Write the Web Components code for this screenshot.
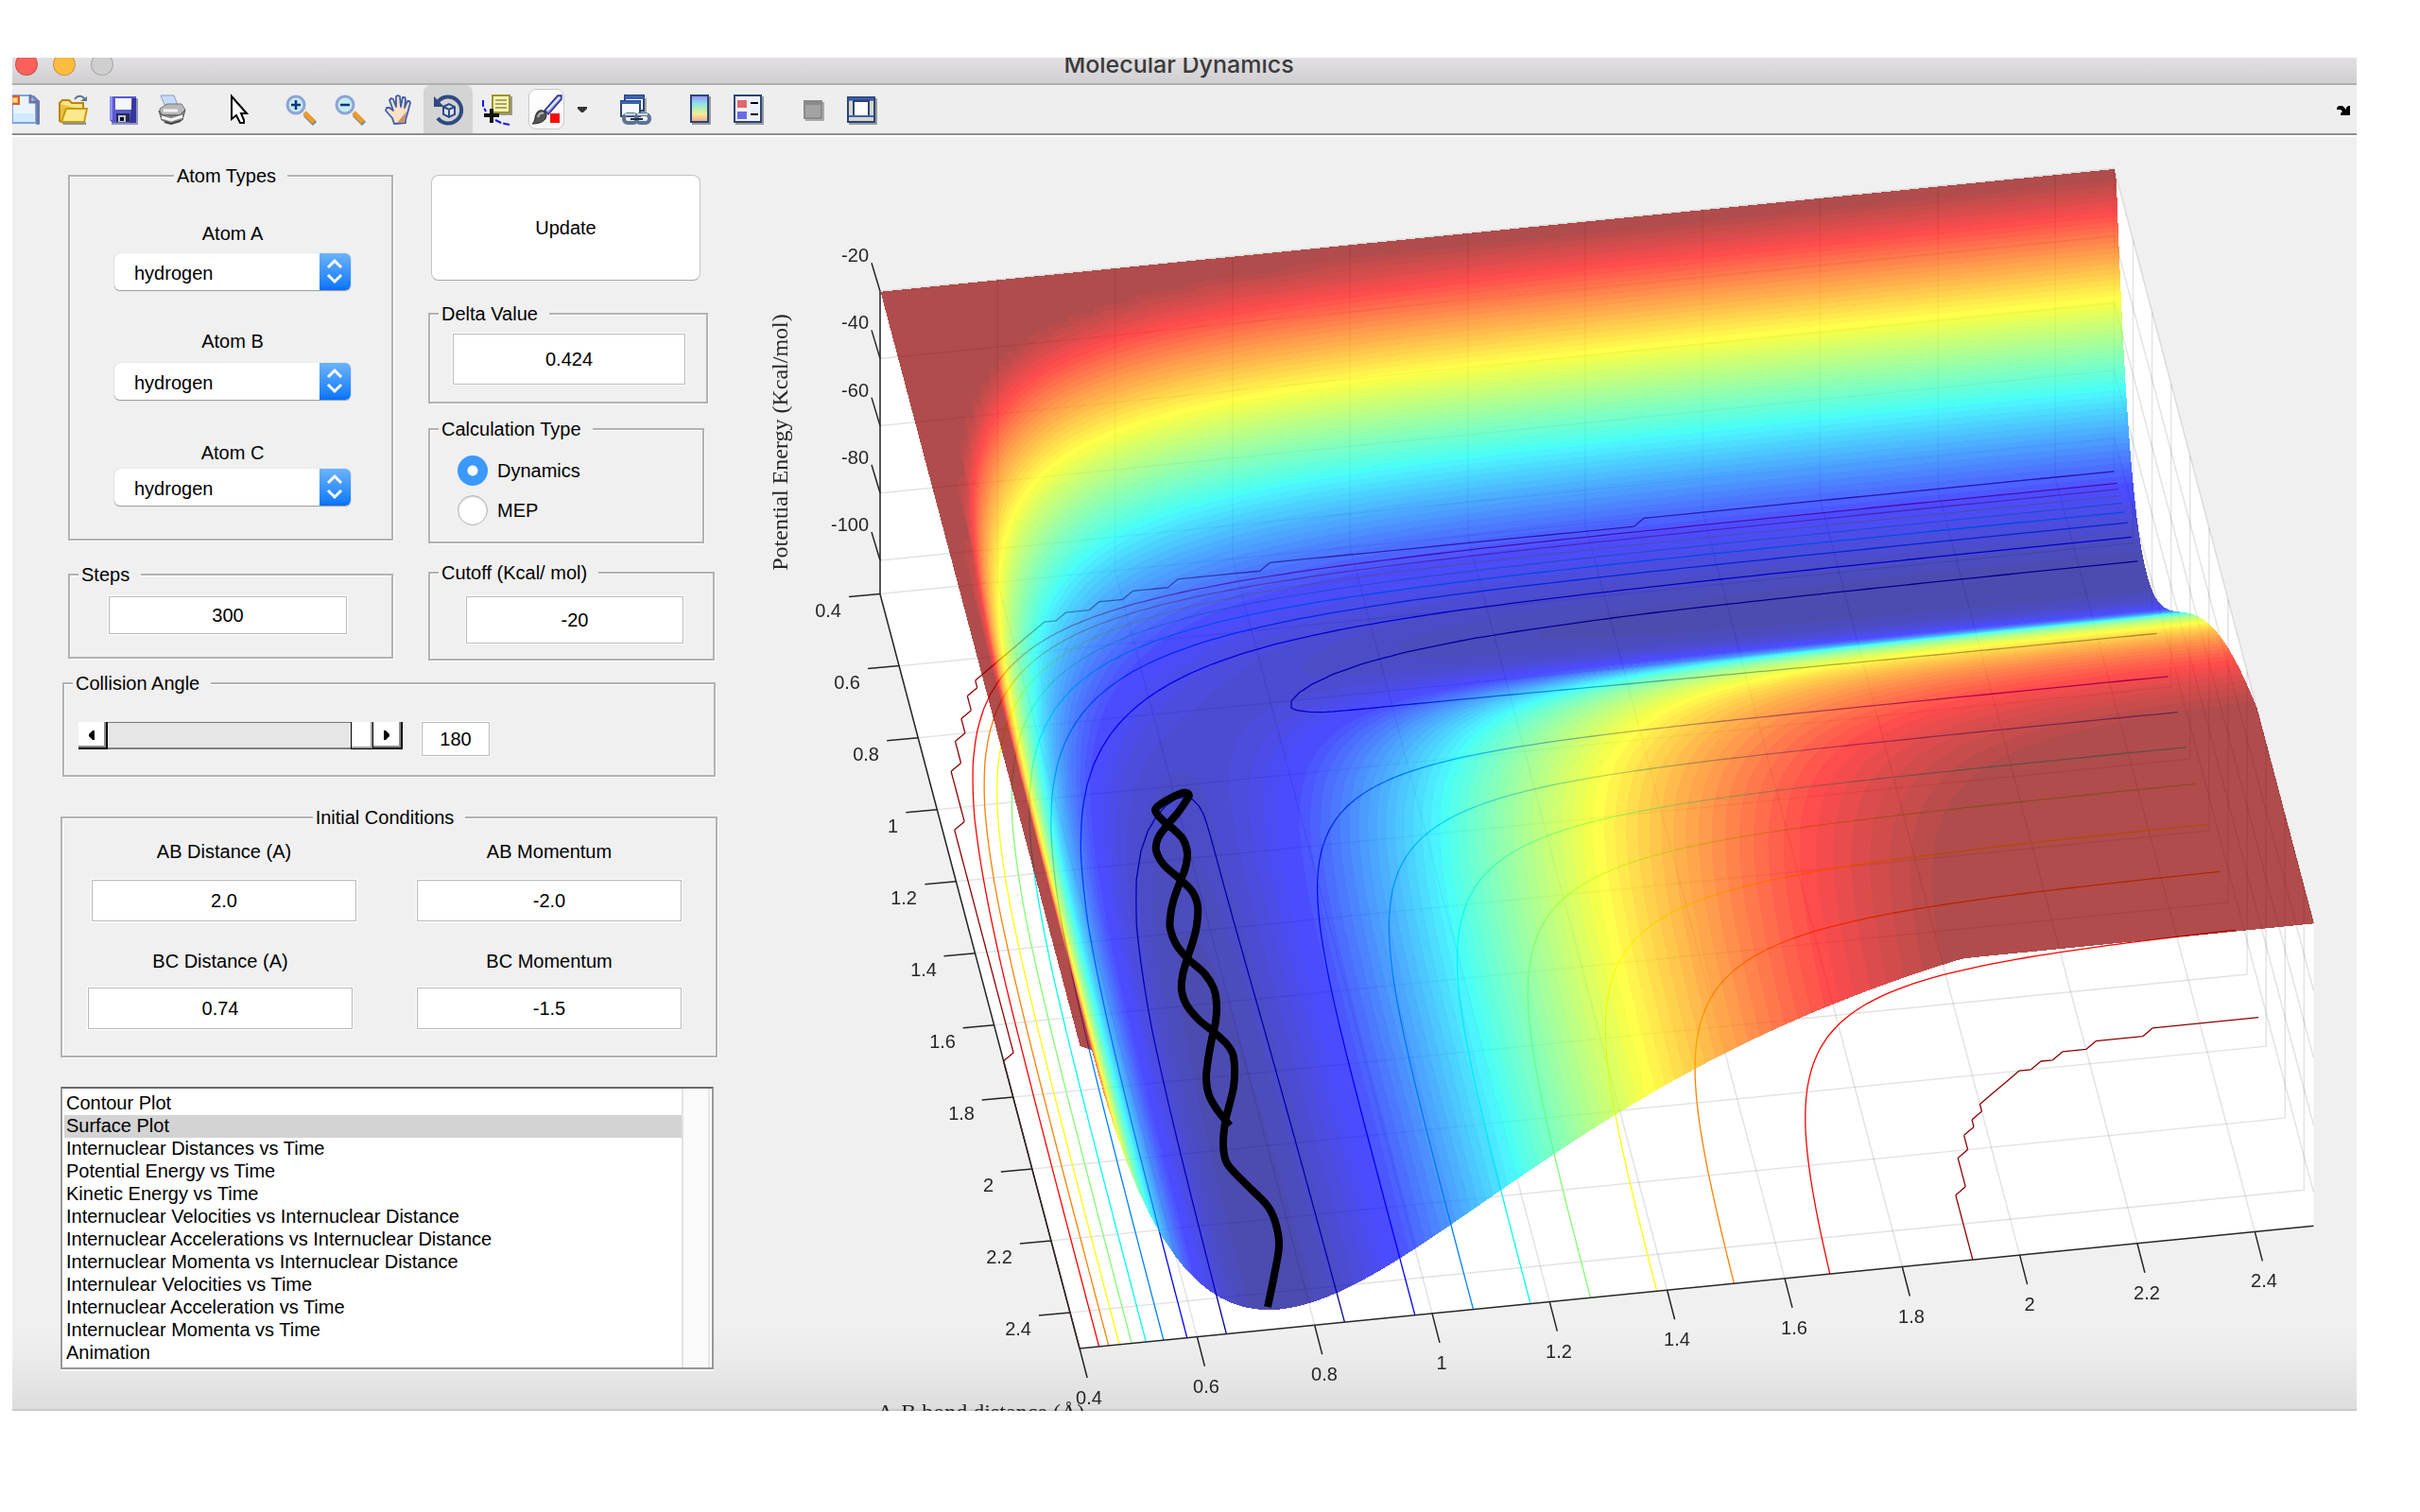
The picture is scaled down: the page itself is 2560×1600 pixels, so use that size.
<!DOCTYPE html>
<html lang="en">
<head>
<meta charset="utf-8">
<title>Molecular Dynamics</title>
<style>
  body { margin: 0; background: #fff; font: 20px/24px "Liberation Sans", Arial, sans-serif; color: #000; }
</style>
</head>
<body>
<md-window caption="Molecular Dynamics">
  <md-toolbar slot="toolbar"></md-toolbar>
  <md-panel slot="panel"></md-panel>
  <md-surface-plot slot="plot"></md-surface-plot>
</md-window>

<script>
const make = (host, html) => {
  const root = host.attachShadow({ mode: 'open' });
  const t = document.createElement('template');
  t.innerHTML = html;
  root.append(t.content.cloneNode(true));
  return root;
};

/* ---------- window frame ---------- */
customElements.define('md-window', class extends HTMLElement {
  constructor() {
    super();
    make(this, `<style>
      :host { display: block; margin: 61px 67px 0 13px; overflow: hidden; background: #f0f0f0; }
      header { display: grid; grid-template-columns: 1fr auto 1fr; align-items: center; align-content: center; height: 14px;
        padding: 0 12px 13px 0; border-bottom: 2px solid #b1b0b1; background: linear-gradient(#e2e0e3, #d0ced1); background-clip: padding-box; }
      .lights { display: flex; gap: 16px; padding-left: 3px; }
      .lights i { box-sizing: border-box; width: 24px; height: 24px; border-radius: 50%; border: 1px solid #0003; }
      h1 { margin: 0; font: 500 25px/32px Inter, sans-serif; color: #3a3a3a; }
      .work { display: grid; grid-template-columns: 757px 1fr;
        background: linear-gradient(#0000, #00000006 40%, #00000014 97%, #0003) bottom / 100% 90px no-repeat; }
    </style>
    <header><div class="lights"><i style="background:#fc605b"></i><i style="background:#fdbc40"></i><i style="background:#cfcfcf"></i></div><h1></h1></header>
    <slot name="toolbar"></slot>
    <div class="work"><slot name="panel"></slot><slot name="plot"></slot></div>`)
      .querySelector('h1').textContent = this.getAttribute('caption');
  }
});

/* ---------- toolbar ---------- */
const ICONS = {
  'new': `<path d="M6 4h22l6 6v24H8z" fill="#6f7fae" transform="translate(-2 -3)"/><path d="M3 1h19l6 7v22H3z" fill="#e9f4ff" stroke="#7ba3dc" stroke-width="2"/><path d="M22 0v8h8v24" fill="none" stroke="#6a76a8" stroke-width="3"/><path d="M4 20h22v9H4z" fill="#d2e9fd"/><path d="M0 2h10v8H0z" fill="#f6a06a" stroke="#d4622e" stroke-width="2"/><path d="M4 4h4v4H4z" fill="#ffe27a"/>`,
  open: `<path d="M3 29h26v3H5z" fill="#8894a4"/><path d="M1 9l3-3h7l3 3h12v8H1z" fill="#fbe38a" stroke="#b8860b" stroke-width="2"/><path d="M1 10v18l2 1h23V16" fill="#e9c243" stroke="#b8860b" stroke-width="2"/><path d="M8 15h22l-3 14H3z" fill="#fde98c" stroke="#c79a12" stroke-width="2"/><path d="M17 5c3-5 9-4 11 1" fill="none" stroke="#5a7796" stroke-width="2"/><path d="M23 7h7V2z" fill="#5a7796"/>`,
  save: `<path d="M4 4h28v28H4z" fill="#8e98b4"/><path d="M2 2h28v28H5l-3-3z" fill="#5a5ad2"/><path d="M2 2h3v25H2z" fill="#8f8ff0"/><path d="M26 4h4v26h-7z" fill="#3636a0"/><path d="M8 4h17v12H8z" fill="#f1f8ff"/><path d="M9 20h14v9H9z" fill="#2a2a4c"/><path d="M11 22h8v7h-8z" fill="#b7c8d4"/><path d="M13 24h4v4h-4z" fill="#112"/>`,
  print: `<path d="M4 1h14l4 10H8z" fill="#c6dcff" stroke="#8d9bb8"/><path d="M3 15l8-5h15l4 6-5 6H4z" fill="#b9b9b9" stroke="#777"/><path d="M2 17l3 10 10 4 12-4 3-11-6 6H6z" fill="#8a8a8a" stroke="#555"/><path d="M7 17h15M5 24l10 3 12-4" stroke="#f4f4f4" stroke-width="3" fill="none"/><path d="M8 29l7 2 10-3" stroke="#444" stroke-width="2" fill="none"/>`,
  arrow: `<path d="M7 2v24l5-4 4 8h4v-3l-3-7h6z" fill="#fff" stroke="#000" stroke-width="2"/>`,
  zin: `<path d="M20 20l10 10" stroke="#888" stroke-width="6" transform="translate(1 1)"/><path d="M20 19l10 10" stroke="#ee9a2c" stroke-width="5"/><circle cx="11" cy="11" r="9" fill="#c4ecf2" stroke="#8fa3d6" stroke-width="3"/><path d="M6 11h10M11 6v10" stroke="#12357a" stroke-width="2.5"/>`,
  zout: `<path d="M20 20l10 10" stroke="#888" stroke-width="6" transform="translate(1 1)"/><path d="M20 19l10 10" stroke="#ee9a2c" stroke-width="5"/><circle cx="11" cy="11" r="9" fill="#c4ecf2" stroke="#8fa3d6" stroke-width="3"/><path d="M6 11h10" stroke="#12357a" stroke-width="2.5"/>`,
  hand: `<path d="M11 31l-2-6-7-8 1-3 3 0 4 3-4-11 2-2 2 1 3 8 0-11 2-1 2 1 1 11 2-10 2 0 1 2-1 9 3-7 2 0 1 2-3 11-2 7v3z" fill="#fde0c6" stroke="#3c5eb0" stroke-width="1.8" stroke-linejoin="round"/><path d="M14 30l10-12-2 12z" fill="#c8946b"/>`,
  rotate: `<path d="M5 8A14 14 0 1 1 5 25" fill="none" stroke="#2f4a80" stroke-width="4"/><path d="M1 2v11h11z" fill="#2f4a80"/><path d="M11 13l6-3 6 3v8l-6 3-6-3zM11 13l6 3 6-3M17 16v8" fill="#dfe3f2" stroke="#2f4a80" stroke-width="2"/>`,
  cursor: `<path d="M12 2h20v20H12z" fill="#999"/><path d="M11 1h18v18H11z" fill="#f7f3b4" stroke="#9a942c" stroke-width="2"/><path d="M14 6h12M14 10h12M14 14h12" stroke="#aaa667" stroke-width="2"/><path d="M1 6v6l3 6M14 27l6 3 9 2" fill="none" stroke="#1414ff" stroke-width="2" stroke-dasharray="7 2"/><path d="M10 15v15M2 22h16" stroke="#111" stroke-width="4"/>`,
  brush: `<path d="M14 17L28 1l4 0 0 4L18 21z" fill="#8c92dc" stroke="#2b2f90" stroke-width="1.5"/><path d="M17 17L30 3" stroke="#e6e9ff" stroke-width="2"/><path d="M1 31c4-3 2-9 6-13 4-3 9 0 9 4 0 6-7 9-15 9z" fill="#555" stroke="#222"/><path d="M7 24c1-4 4-5 6-4" stroke="#bbb" stroke-width="2" fill="none"/><path d="M20 20h10v10H20z" fill="#f80d0d"/>`,
  link: `<path d="M8 4h20v18H8z" fill="#aaa"/><path d="M5 1h20v16H5z" fill="#fff" stroke="#2c4478" stroke-width="2"/><path d="M5 1h20v4H5z" fill="#3b62b4"/><path d="M1 7h20v16H1z" fill="#f4f8ff" stroke="#2c4478" stroke-width="2"/><path d="M1 7h20v3H1z" fill="#3b62b4"/><rect x="4" y="21" width="14" height="9" rx="4" fill="none" stroke="#5f7391" stroke-width="4"/><rect x="17" y="21" width="14" height="9" rx="4" fill="none" stroke="#5f7391" stroke-width="4"/><path d="M5 21h11M18 21h11" stroke="#c9dcf0" stroke-width="2"/><path d="M11 26h13" stroke="#16304f" stroke-width="2"/>`,
  colorbar: `<defs><linearGradient id="g" x2="0" y2="1"><stop stop-color="#9a8df0"/><stop offset=".3" stop-color="#8fe0ee"/><stop offset=".5" stop-color="#b2efb0"/><stop offset=".7" stop-color="#f5eb95"/><stop offset="1" stop-color="#f0a592"/></linearGradient></defs><path d="M8 2h20v30H8z" fill="#999"/><path d="M7 1h18v28H7z" fill="url(#g)" stroke="#2c4478" stroke-width="2"/>`,
  legend: `<path d="M2 2h30v30H2z" fill="#999"/><path d="M1 1h28v28H1z" fill="#eef3fb" stroke="#2c4478" stroke-width="2"/><path d="M4 6h10v8H4z" fill="#e36868"/><path d="M4 18h10v8H4z" fill="#6a6ae6"/><path d="M18 9h8M18 21h8" stroke="#000" stroke-width="2"/>`,
  hide: `<path d="M8 8h20v20H8z" fill="#aaa"/><path d="M7 7h18v18H7z" fill="#a3a3a3" stroke="#8a8a8a" stroke-width="2"/><path d="M7 9h18" stroke="#8a8a8a" stroke-width="4"/>`,
  show: `<path d="M2 4h30v28H2z" fill="#999"/><path d="M1 3h28v26H1z" fill="#d6d6cc" stroke="#2c4478" stroke-width="2"/><path d="M1 3h28v3H1z" fill="#3b62b4" stroke="#2c4478"/><path d="M7 7h16v16H7z" fill="#fff" stroke="#2c4478" stroke-width="2"/><path d="M2 23h26" stroke="#3b62b4" stroke-width="2"/>`
};
customElements.define('md-tool', class extends HTMLElement {
  constructor() {
    super();
    make(this, `<style>
      :host { display: block; }
      button { display: grid; place-items: center; width: 52px; height: 51px; margin: 0; padding: 1px 0 0; border: 0; background: none; border-radius: 8px 8px 0 0; }
      :host([active]) button { background: #d4d4d4; }
      :host([framed]) button { width: 38px; height: 43px; margin: 4px 7px; border-radius: 8px; background: linear-gradient(#fff, #f6f6f6); border: 1px solid #c9c9c9; }
      svg { display: block; overflow: visible; }
    </style><button aria-label="${this.getAttribute('icon')}"><svg width="32" height="32" viewBox="0 0 32 32">${ICONS[this.getAttribute('icon')]}</svg></button>`);
  }
});
customElements.define('md-toolbar', class extends HTMLElement {
  constructor() {
    super();
    const t = (n, a = '') => `<md-tool icon="${n}" ${a}></md-tool>`;
    make(this, `<style>
      :host { display: flex; justify-content: space-between; align-items: center; height: 51px; background: #eee;
        border-bottom: 2px solid #8d8d8d; box-shadow: 0 2px 0 #fff; margin-bottom: 2px; }
      .tools { display: flex; align-items: center; margin-left: -13px; }
      .tools div { display: flex; align-items: center; }
      .a { margin-right: 20px; } .b { margin-right: 12px; } .c { margin-right: 18px; } .d { margin-right: 16px; }
      button { padding: 0; border: 0; background: none; width: 24px; height: 40px; display: grid; place-items: center; }
      .dock { width: 21px; place-items: center start; padding-top: 2px; }
      svg { display: block; }
    </style>
    <div class="tools">
      <div class="a">${t('new')}${t('open')}${t('save')}${t('print')}</div>
      <div class="b">${t('arrow')}</div>
      <div class="c">${t('zin')}${t('zout')}${t('hand')}${t('rotate', 'active')}${t('cursor')}${t('brush', 'framed')}
        <button aria-label="Brush options"><svg width="10" height="6"><path d="M0 0h10v2L6 6H4L0 2z" fill="#333"/></svg></button></div>
      <div class="d">${t('link')}</div>
      <div class="d">${t('colorbar')}${t('legend')}</div>
      <div>${t('hide')}${t('show')}</div>
    </div>
    <button class="dock" aria-label="Dock figure"><svg width="14" height="10"><path d="M0 2l2-2h4l4 4V2l2-2h2v10H4V8l2-2-2-2H0z" fill="#000"/></svg></button>`);
  }
});

/* ---------- form parts ---------- */
customElements.define('md-group', class extends HTMLElement {
  constructor() {
    super();
    make(this, `<style>
      :host { display: block; }
      fieldset { margin: 0; min-width: 0; padding: 0; border: 2px solid #b2b2b2; box-shadow: 2px 2px 0 -1px #fff, inset 2px 2px 0 -1px #fff; }
      legend { margin-left: 9px; padding: 0 12px 0 3px; background: #f0f0f0; line-height: 24px; }
      :host([centered]) legend { margin: 0 auto; }
      div { padding: var(--pad, 0); }
    </style><fieldset><legend>${this.getAttribute('label')}</legend><div><slot></slot></div></fieldset>`);
  }
});
customElements.define('md-text', class extends HTMLElement {
  constructor() {
    super();
    const label = this.getAttribute('label');
    make(this, `<style>
      :host { display: flex; flex-direction: column; width: var(--w); }
      label { text-align: center; margin-bottom: var(--gap, 16px); }
      input { box-sizing: border-box; width: 100%; height: var(--h, 44px); margin: 0; padding: 0; border: 1px solid #b9b9b9; border-radius: 0;
        box-shadow: 0 0 0 1px #fff; background: #fff; font: inherit; color: inherit; text-align: center; outline: 0; }
    </style>${label ? `<label for="i">${label}</label>` : ''}<input id="i" type="text" value="${this.getAttribute('value')}" aria-label="${label || this.getAttribute('name')}">`);
  }
});
customElements.define('md-dropdown', class extends HTMLElement {
  constructor() {
    super();
    make(this, `<style>
      :host { display: flex; flex-direction: column; align-items: center; }
      label { margin-bottom: var(--gap); }
      div { display: grid; width: 250px; height: 39px; border-radius: 6px; overflow: hidden; background: #fff; box-shadow: 0 1px 1px #999, 0 0 1px #aaa; }
      select { grid-area: 1 / 1; appearance: none; width: 100%; border: 0; background: none; padding: 3px 40px 0 21px; font: inherit; color: inherit; }
      svg { grid-area: 1 / 1; justify-self: end; pointer-events: none; background: linear-gradient(#6cb3fa, #1a80fd 85%, #0a6cf5); }
    </style><label for="s">${this.getAttribute('label')}</label>
    <div><select id="s"><option>hydrogen</option></select>
    <svg width="33" height="39"><path d="M9 15l7-7 7 7M9 23l7 7 7-7" fill="none" stroke="#fff" stroke-width="3"/></svg></div>`);
  }
});
customElements.define('md-radios', class extends HTMLElement {
  constructor() {
    super();
    make(this, `<style>
      :host { display: flex; flex-direction: column; gap: 10px; }
      label { display: flex; align-items: center; gap: 10px; }
      input { appearance: none; box-sizing: border-box; width: 32px; height: 32px; margin: 0; border-radius: 50%; background: #fff; border: 1px solid #b5b5b5; box-shadow: inset 0 1px 2px #0003; }
      input:checked { border: 0; box-shadow: none; background: radial-gradient(circle, #fff 5px, #3b99fc 6px); }
    </style><label><input type="radio" name="calc" checked>Dynamics</label><label><input type="radio" name="calc">MEP</label>`);
  }
});
customElements.define('md-slider', class extends HTMLElement {
  constructor() {
    super();
    make(this, `<style>
      :host { display: flex; width: 343px; height: 29px; }
      button { width: 31px; padding: 0 4px 2px 0; border: 0; background: #fff; box-shadow: inset -2px -2px #000, inset -4px -4px #8c8c8c; display: grid; place-items: center; }
      input { appearance: none; flex: 1; min-width: 0; height: 29px; margin: 0; background: #e6e6e6; box-shadow: inset 0 1px #777, inset 0 -2px #808080; }
      input::-webkit-slider-thumb { appearance: none; width: 24px; height: 29px; background: #fff; box-shadow: inset 1px 0 #000, inset -1px -1px #000, inset -3px -3px #999; }
    </style>
    <button aria-label="Decrease angle"><svg width="6" height="10"><path d="M6 0v10H4L0 6V4l4-4z"/></svg></button>
    <input type="range" min="0" max="180" value="180" aria-label="Collision Angle">
    <button aria-label="Increase angle"><svg width="6" height="10"><path d="M0 0v10h2l4-4V4L2 0z"/></svg></button>`);
  }
});
customElements.define('md-listbox', class extends HTMLElement {
  constructor() {
    super();
    const items = ['Contour Plot', 'Surface Plot', 'Internuclear Distances vs Time', 'Potential Energy vs Time', 'Kinetic Energy vs Time',
      'Internuclear Velocities vs Internuclear Distance', 'Internuclear Accelerations vs Internuclear Distance',
      'Internuclear Momenta vs Internuclear Distance', 'Internulear Velocities vs Time', 'Internuclear Acceleration vs Time',
      'Internuclear Momenta vs Time', 'Animation'];
    make(this, `<style>
      :host { display: block; }
      select { display: block; box-sizing: border-box; width: 100%; height: 299px; margin: 0; padding: 4px 32px 0 2px; border: 2px solid #979797; border-top-color: #6b6b6b;
        border-radius: 0; outline: 0; overflow: hidden; font: inherit; color: #000; box-shadow: 0 2px #fafafa;
        background: linear-gradient(90deg, #e2e2e2 2px, #fafafa 2px, #fafafa 28px, #e6e6e6 28px, #e6e6e6 30px, #fff 30px) right / 32px 100% no-repeat #fff; }
      option { height: 24px; min-height: 24px; line-height: 24px; padding: 0 2px; box-sizing: border-box; color: #000; }
      option:checked { background: linear-gradient(#d3d3d3, #d3d3d3); color: #000; }
    </style><select size="12" aria-label="Plot type">${items.map((s, i) => `<option${i === 1 ? ' selected' : ''}>${s}</option>`).join('')}</select>`);
  }
});

/* ---------- control panel ---------- */
customElements.define('md-panel', class extends HTMLElement {
  constructor() {
    super();
    make(this, `<style>
      :host { display: flex; flex-direction: column; padding: 29px 11px 0 51px; }
      .top { display: flex; gap: 37px; padding-left: 8px; }
      .left { width: 344px; display: flex; flex-direction: column; gap: 24px; }
      .right { flex: 1; display: flex; flex-direction: column; padding-top: 11px; }
      .atoms { --pad: 37px 0 35px 4px; }
      .update { width: 285px; height: 112px; margin: 0 0 23px 3px; border: 1px solid #c4c4c4; border-bottom-color: #aaa; border-radius: 8px; background: #fff; font: inherit; padding: 0; }
      .steps { --pad: 11px 47px 24px 41px; }
      .delta { --pad: 9px 22px 18px 24px; width: 296px; margin-bottom: 15px; }
      .calc { --pad: 16px 29px 17px; width: 292px; margin-bottom: 19px; }
      .cut { --pad: 13px 31px 16px 38px; width: 303px; }
      .angle { --pad: 29px 15px 20px; margin: 12px 2px 31px 2px; }
      .line { display: flex; align-items: flex-start; gap: 20px; }
      .init { --pad: 12px 0 28px; margin-bottom: 31px; }
      .row { display: flex; --w: 280px; }
      .one { padding-left: 31px; gap: 64px; margin-bottom: 30px; --gap: 18px; }
      .two { padding-left: 27px; gap: 68px; --gap: 16px; }
      md-listbox { margin-right: 4px; }
    </style>
    <div class="top">
      <div class="left">
        <md-group class="atoms" label="Atom Types" centered>
          <md-dropdown label="Atom A" style="--gap:9px"></md-dropdown>
          <md-dropdown label="Atom B" style="--gap:11px;margin:42px 0 44px"></md-dropdown>
          <md-dropdown label="Atom C" style="--gap:5px"></md-dropdown>
        </md-group>
        <md-group class="steps" label="Steps"><md-text name="Steps" value="300" style="--h:40px"></md-text></md-group>
      </div>
      <div class="right">
        <button class="update">Update</button>
        <md-group class="delta" label="Delta Value"><md-text name="Delta Value" value="0.424" style="--h:54px"></md-text></md-group>
        <md-group class="calc" label="Calculation Type"><md-radios></md-radios></md-group>
        <md-group class="cut" label="Cutoff (Kcal/ mol)"><md-text name="Cutoff" value="-20" style="--h:50px"></md-text></md-group>
      </div>
    </div>
    <md-group class="angle" label="Collision Angle"><div class="line"><md-slider></md-slider><md-text name="Angle" value="180" style="--w:72px;--h:36px"></md-text></div></md-group>
    <md-group class="init" label="Initial Conditions" centered>
      <div class="row one"><md-text label="AB Distance (A)" value="2.0"></md-text><md-text label="AB Momentum" value="-2.0"></md-text></div>
      <div class="row two"><md-text label="BC Distance (A)" value="0.74"></md-text><md-text label="BC Momentum" value="-1.5"></md-text></div>
    </md-group>
    <md-listbox></md-listbox>`);
  }
});

/* ---------- surface plot ---------- */
// LEPS potential for collinear H + H2, energies in kcal/mol, distances in angstrom
const D = 104.2, BETA = 1.99, RE = 0.74, KAPPA = 0.697, CUT = -20;
function pair(r) {
  const e = Math.exp(-BETA * (r - RE)), s = D * (e * e - 2 * e), t = KAPPA * D / 2 * (e * e + 2 * e);
  return [(s + t) / 2, (s - t) / 2];
}
function leps(a, b) {
  const [q1, j1] = pair(a), [q2, j2] = pair(b), [q3, j3] = pair(a + b);
  return Math.min(CUT, q1 + q2 + q3 - Math.sqrt(((j1 - j2) ** 2 + (j2 - j3) ** 2 + (j1 - j3) ** 2) / 2));
}
const OX = 770, OY = 145, W = 1723, H = 1348, ZMIN = -110, N = 105, STEP = 0.02;
const project = (x, y, z) => {
  const u = x - 0.4, v = y - 0.4;
  return [931 - OX + 621.6 * u + 100.5 * v, 628.6 - OY - 61.8 * u + 380.2 * v - 3.56 * (z - ZMIN)];
};
function jet(i) {
  const f = k => Math.max(0, Math.min(1, k));
  const m = i + 1, ramp = c => f(m <= c ? (m - c + 24) / 16 : (c + 24 - m) / 16);
  return [ramp(49), ramp(33), ramp(16)].map(v => Math.round(v * 255));
}
const css = c => `rgb(${c.join()})`;
const TRACK = [[1341,1383],[1348,1349],[1353,1318],[1349,1293],[1340,1275],[1317,1252],[1298,1231],[1294,1211],[1296,1188],[1300,1171],[1305,1150],[1306,1130],[1304,1115],[1297,1104],[1284,1092],[1268,1079],[1255,1063],[1250,1048],[1251,1032],[1256,1014],[1262,996],[1266,979],[1267,959],[1261,943],[1248,930],[1231,915],[1223,900],[1225,887],[1234,874],[1246,860],[1255,847],[1258,842],[1255,839],[1248,840],[1234,847],[1223,855],[1223,860],[1231,869],[1242,878],[1252,889],[1256,903],[1254,918],[1248,934],[1241,954],[1238,970],[1238,983],[1244,999],[1256,1014],[1274,1030],[1284,1046],[1287,1063],[1286,1081],[1282,1099],[1278,1121],[1276,1142],[1279,1159],[1288,1175],[1301,1191]];

customElements.define('md-surface-plot', class extends HTMLElement {
  constructor() {
    super();
    const ticks = [], labels = [];
    const seg = (x1, y1, x2, y2) => ticks.push(`M${x1.toFixed(1)} ${y1.toFixed(1)}L${x2.toFixed(1)} ${y2.toFixed(1)}`);
    const text = (x, y, s, a) => labels.push(`<text x="${Math.round(x)}" y="${Math.round(y)}" text-anchor="${a}">${s}</text>`);
    for (let k = 2; k <= 12; k++) {
      const v = k / 5;
      let [x, y] = project(v, 2.5, ZMIN);
      seg(x, y, x + 8, y + 31); text(x + 10, y + 59, String(v), 'middle');
      [x, y] = project(0.4, v, ZMIN);
      seg(x, y, x - 33, y + 3); text(x - 41, y + 24, String(v), 'end');
    }
    for (let z = -20; z >= -100; z -= 20) {
      const [x, y] = project(0.4, 0.4, z);
      seg(x, y, x - 9, y - 30); text(x - 12, y - 31, String(z), 'end');
    }
    const corner = [[0.4, 0.4, -20], [0.4, 0.4, ZMIN], [0.4, 2.5, ZMIN], [2.5, 2.5, ZMIN]].map(p => project(...p));
    // smooth the trajectory with Catmull-Rom segments
    const T = TRACK.map(([x, y]) => [x - OX, y - OY]);
    let path = `M${T[0]}`;
    for (let i = 0; i < T.length - 1; i++) {
      const a = T[Math.max(0, i - 1)], b = T[i], c = T[i + 1], d = T[Math.min(T.length - 1, i + 2)];
      const q = [b[0] + (c[0] - a[0]) / 6, b[1] + (c[1] - a[1]) / 6, c[0] - (d[0] - b[0]) / 6, c[1] - (d[1] - b[1]) / 6];
      path += `C${q.map(n => n.toFixed(1))},${c}`;
    }
    this.root = make(this, `<style>
      :host { display: grid; }
      canvas, svg { grid-area: 1 / 1; display: block; width: 100%; height: auto; }
      text { font: 20px "Liberation Sans", Arial, sans-serif; fill: #262626; }
      .axis { font: 24px "Liberation Serif", "Times New Roman", serif; }
    </style>
    <canvas width="${W}" height="${H}"></canvas>
    <svg viewBox="0 0 ${W} ${H}">
      <g fill="none" stroke="#262626" stroke-width="1.5"><path d="${ticks.join('')}"/><polyline points="${corner.join(' ')}"/></g>
      <path d="${path}" fill="none" stroke="#000" stroke-width="8" stroke-linejoin="round"/>
      ${labels.join('')}
      <text class="axis" text-anchor="middle" transform="translate(63 323) rotate(-90)">Potential Energy (Kcal/mol)</text>
      <text class="axis" x="158" y="1357">A-B bond distance (Å)</text>
    </svg>`);
  }
  connectedCallback() {
    const ctx = this.root.querySelector('canvas').getContext('2d');
    const line = (...pts) => {
      ctx.beginPath();
      pts.forEach((p, i) => ctx[i ? 'lineTo' : 'moveTo'](...project(...p)));
    };
    // axes box: floor, back wall, right wall
    ctx.fillStyle = '#fff';
    line([0.4, 0.4, -20], [0.4, 0.4, ZMIN], [0.4, 2.5, ZMIN], [2.5, 2.5, ZMIN], [2.5, 2.5, -20], [2.5, 0.4, -20]);
    ctx.fill();
    ctx.strokeStyle = 'rgba(38,38,38,.13)';
    ctx.lineWidth = 1.5;
    for (let k = 2; k <= 12; k++) {
      const v = k / 5;
      line([v, 0.4, -20], [v, 0.4, ZMIN], [v, 2.5, ZMIN]); ctx.stroke();
      line([0.4, v, ZMIN], [2.5, v, ZMIN], [2.5, v, -20]); ctx.stroke();
    }
    for (let z = -20; z >= -100; z -= 20) { line([0.4, 0.4, z], [2.5, 0.4, z], [2.5, 2.5, z]); ctx.stroke(); }

    const g = i => 0.4 + i * STEP, Z = [];
    for (let j = 0; j <= N; j++) { Z.push([]); for (let i = 0; i <= N; i++) Z[j].push(leps(g(i), g(j))); }
    let lo = 0; for (const r of Z) for (const v of r) lo = Math.min(lo, v);
    const index = z => Math.max(0, Math.min(63, Math.floor((z - lo) / (CUT - lo) * 64)));

    // contours on the floor by marching squares
    ctx.lineWidth = 1.3;
    for (let L = -100; L <= -20; L += 10) {
      ctx.strokeStyle = css(jet(Math.min(63, Math.floor((L + 100) / 80 * 64))));
      ctx.beginPath();
      for (let j = 0; j < N; j++) for (let i = 0; i < N; i++) {
        const c = [[i, j], [i + 1, j], [i + 1, j + 1], [i, j + 1]], hit = [];
        for (let e = 0; e < 4; e++) {
          const [a, b] = [c[e], c[(e + 1) % 4]], za = Z[a[1]][a[0]], zb = Z[b[1]][b[0]];
          if ((za < L) !== (zb < L)) {
            const t = (L - za) / (zb - za);
            hit.push(project(g(a[0] + t * (b[0] - a[0])), g(a[1] + t * (b[1] - a[1])), ZMIN));
          }
        }
        for (let h = 0; h + 1 < hit.length; h += 2) { ctx.moveTo(...hit[h]); ctx.lineTo(...hit[h + 1]); }
      }
      ctx.stroke();
    }

    // translucent surface, painted far to near into its own layer
    const layer = document.createElement('canvas'); layer.width = W; layer.height = H;
    const lc = layer.getContext('2d'), img = lc.createImageData(W, H);
    const buf = new Uint32Array(img.data.buffer);
    const pal = Array.from({ length: 64 }, (_, i) => { const [r, gg, b] = jet(i); return ((179 << 24) | (b << 16) | (gg << 8) | r) >>> 0; });
    const tri = (a, b, c) => {
      const d = (b[0] - a[0]) * (c[1] - a[1]) - (c[0] - a[0]) * (b[1] - a[1]);
      if (!d) return;
      const y0 = Math.max(0, Math.ceil(Math.min(a[1], b[1], c[1]))), y1 = Math.min(H - 1, Math.floor(Math.max(a[1], b[1], c[1])));
      const x0 = Math.max(0, Math.ceil(Math.min(a[0], b[0], c[0]))), x1 = Math.min(W - 1, Math.floor(Math.max(a[0], b[0], c[0])));
      for (let y = y0; y <= y1; y++) for (let x = x0; x <= x1; x++) {
        const s = ((x - a[0]) * (c[1] - a[1]) - (c[0] - a[0]) * (y - a[1])) / d;
        const t = ((b[0] - a[0]) * (y - a[1]) - (x - a[0]) * (b[1] - a[1])) / d;
        if (s >= -1e-6 && t >= -1e-6 && s + t <= 1 + 1e-6) buf[y * W + x] = pal[index(a[2] + s * (b[2] - a[2]) + t * (c[2] - a[2]))];
      }
    };
    const P = Z.map((r, j) => r.map((z, i) => [...project(g(i), g(j), z), z]));
    for (let j = 0; j < N; j++) for (let i = N - 1; i >= 0; i--) {
      tri(P[j][i], P[j][i + 1], P[j + 1][i + 1]);
      tri(P[j][i], P[j + 1][i + 1], P[j + 1][i]);
    }
    lc.putImageData(img, 0, 0);
    ctx.drawImage(layer, 0, 0);
  }
});
</script>
</body>
</html>
